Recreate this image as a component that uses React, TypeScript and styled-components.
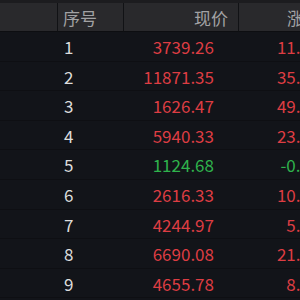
import React from "react"
import styled, { createGlobalStyle } from "styled-components"

const GlobalStyle = createGlobalStyle`
  html, body {
    margin: 0;
    padding: 0;
    background: #121419;
  }
  body {
    font-family: "Noto Sans CJK SC", "Noto Sans", sans-serif;
  }
`

const Board = styled.div`
  width: 300px;
  height: 300px;
  overflow: hidden;
  background: #121419;
  border-top: 3px solid #1c1c1f;
`

const Grid = styled.div`
  display: grid;
  grid-template-columns: 57px 66px 115px 110px;
  width: 348px;
`

const HeadCell = styled.div<{ $align?: "left" | "right" }>`
  height: 29px;
  background: #29292c;
  border-left: 1px solid #111215;
  border-bottom: 1px solid #0d0e11;
  color: #a2a2a4;
  font-size: 17px;
  line-height: 29px;
  text-align: ${(p) => p.$align || "left"};
  padding: ${(p) => (p.$align === "right" ? "0 10px 0 0" : "0 0 0 5px")};
  box-sizing: border-box;
  white-space: nowrap;
  &:first-child {
    border-left: none;
  }
`

const Cell = styled.div<{ $tone?: "up" | "down" | "plain"; $pad?: string }>`
  height: 29.6px;
  line-height: 29.6px;
  font-size: 17px;
  border-bottom: 1px solid #0e0f13;
  box-sizing: border-box;
  white-space: nowrap;
  text-align: right;
  padding: ${(p) => p.$pad || "0"};
  color: ${(p) =>
    p.$tone === "up" ? "#dd3d43" : p.$tone === "down" ? "#2fb24c" : "#dcdcdc"};
`

const IndexCell = styled(Cell)`
  text-align: left;
  padding-left: 7px;
`

type Row = { no: number; price: string; change: string }

const rows: Row[] = [
  { no: 1, price: "3739.26", change: "11.26%" },
  { no: 2, price: "11871.35", change: "35.18%" },
  { no: 3, price: "1626.47", change: "49.02%" },
  { no: 4, price: "5940.33", change: "23.41%" },
  { no: 5, price: "1124.68", change: "-0.53%" },
  { no: 6, price: "2616.33", change: "10.77%" },
  { no: 7, price: "4244.97", change: "5.36%" },
  { no: 8, price: "6690.08", change: "21.84%" },
  { no: 9, price: "4655.78", change: "8.15%" },
]

const App = () => (
  <>
    <GlobalStyle />
    <Board>
      <Grid>
        <HeadCell />
        <HeadCell>序号</HeadCell>
        <HeadCell $align="right">现价</HeadCell>
        <HeadCell $align="right">涨跌幅</HeadCell>
        {rows.map((r) => {
          const tone = r.change.startsWith("-") ? "down" : "up"
          return (
            <React.Fragment key={r.no}>
              <Cell />
              <IndexCell>{r.no}</IndexCell>
              <Cell $tone={tone} $pad="0 24px 0 0">
                {r.price}
              </Cell>
              <Cell $tone={tone} $pad="0 13px 0 0">
                {r.change}
              </Cell>
            </React.Fragment>
          )
        })}
      </Grid>
    </Board>
  </>
)

export default App
